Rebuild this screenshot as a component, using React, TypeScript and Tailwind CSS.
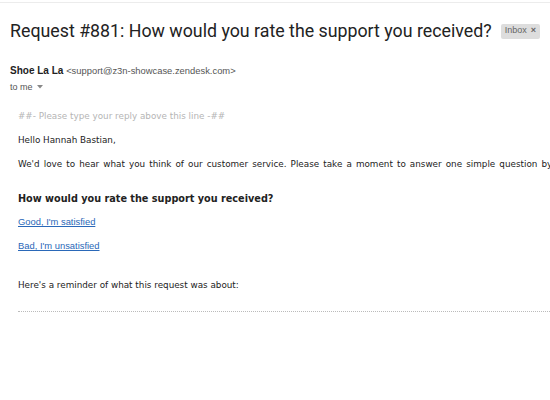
export default function App() {
  return (
    <div className="h-[400px] w-[550px] overflow-hidden bg-white">
      <div className="h-[3px] border-b border-[#ececec]" />

      {/* Subject */}
      <div className="flex items-center pl-[10px] pt-[16px]">
        <h1 className="whitespace-nowrap font-['Roboto',sans-serif] text-[17.8px] leading-[24px] text-[#222]">
          Request #881: How would you rate the support you received?
        </h1>
        <span className="ml-[9px] flex h-[15px] items-center gap-[4px] rounded-[2px] bg-[#ddd] px-[4px] font-['Liberation_Sans',sans-serif] text-[9px] text-[#666]">
          Inbox <span className="text-[9px] font-bold">×</span>
        </span>
      </div>

      {/* Sender */}
      <div className="pl-[10px] pt-[21px] font-['Liberation_Sans',sans-serif]">
        <div className="whitespace-nowrap text-[10px] leading-[14px] text-[#222]">
          <span className="font-bold">Shoe La La</span>{' '}
          <span className="text-[9.4px] text-[#555]">&lt;support@z3n-showcase.zendesk.com&gt;</span>
        </div>
        <div className="mt-[3px] flex items-center gap-[4px] text-[9px] leading-[12px] text-[#555]">
          to me
          <svg width="6" height="4" viewBox="0 0 6 4">
            <path d="M0 0h6L3 3.5z" fill="#888" />
          </svg>
        </div>
      </div>

      {/* Body */}
      <div className="whitespace-nowrap pl-[18px] pt-[17px] font-['DejaVu_Sans',sans-serif] text-[8.8px] leading-[12px] text-[#222]">
        <p className="text-[#b5b5b5]">##- Please type your reply above this line -##</p>
        <p className="mt-[12px]">Hello Hannah Bastian,</p>
        <p className="mt-[12px] [word-spacing:1.3px]">
          We'd love to hear what you think of our customer service. Please take a moment to answer one simple question by clicking either link below:
        </p>
        <p className="mt-[22px] text-[9.7px] font-bold leading-[14px]">How would you rate the support you received?</p>
        <div className="font-['Liberation_Sans',sans-serif] text-[9.4px]">
          <p className="mt-[10px]">
            <a href="#" className="text-[#2a68b8] underline">Good, I'm satisfied</a>
          </p>
          <p className="mt-[12px]">
            <a href="#" className="text-[#2a68b8] underline">Bad, I'm unsatisfied</a>
          </p>
        </div>
        <p className="mt-[27px]">Here's a reminder of what this request was about:</p>
        <div className="mt-[20px] border-t border-dotted border-[#bbb]" />
      </div>
    </div>
  );
}
